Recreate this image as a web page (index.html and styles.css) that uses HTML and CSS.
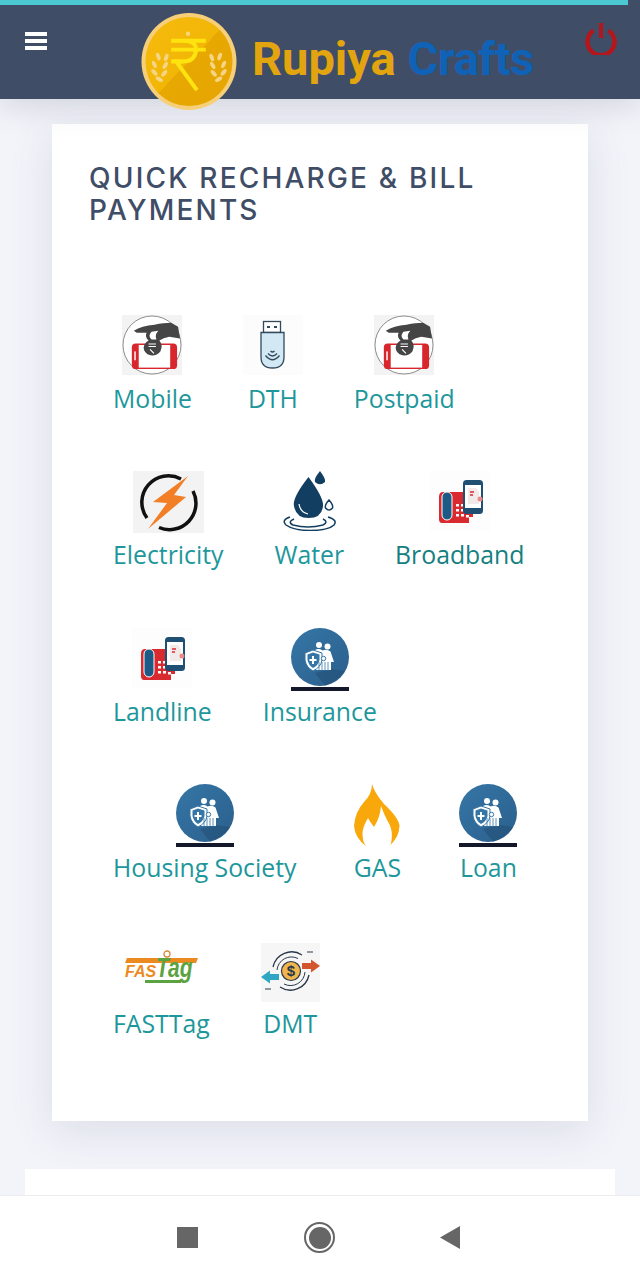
FILE: index.html
```html
<!DOCTYPE html>
<html lang="en">
<head>
<meta charset="utf-8">
<title>Rupiya Crafts</title>
<link rel="stylesheet" href="styles.css">
</head>
<body>
<svg class="defs" width="0" height="0" aria-hidden="true">
  <defs>
    <symbol id="i-mobile" viewBox="0 0 61 61">
      <rect width="61" height="61" fill="#f4f3f3"/>
      <circle cx="30.5" cy="30.5" r="29.5" fill="#fff" stroke="#8a8a8a" stroke-width="1"/>
      <rect x="10" y="29" width="46" height="26" rx="4" fill="#d8262c"/>
      <rect x="17" y="30.500" width="32" height="23" fill="#fff"/>
      <rect x="12.500" y="37" width="1.500" height="9" fill="#fff"/>
      <path d="M12 16 Q20 11 33 10 Q43 8 50 8 L57 12 L59 24 L48 22 Q42 23 38 26 Q42 31 39 37 Q35 42 29 41 Q22 39 22 33 Q23 28 27 26 Q23 22 25 18 L15 18 Z" fill="#454545"/>
      <path d="M30 17 Q26 21 30 25 L35 25 Q33 20 37 16 Z" fill="#fff"/>
      <path d="M27 29.500 H34.500 M27 32 H34.500 M28.500 35 L32.500 39" stroke="#fff" stroke-width="1.200" fill="none"/>
    </symbol>
    <symbol id="i-dth" viewBox="0 0 60 60">
      <rect width="60" height="60" fill="#fcfcfc"/>
      <rect x="20.500" y="6.500" width="17" height="11" fill="#fff" stroke="#33495c" stroke-width="1.300"/>
      <rect x="24" y="11" width="3" height="2" fill="#33495c"/>
      <rect x="31" y="11" width="3" height="2" fill="#33495c"/>
      <path d="M18 17.500 H41 V42 Q41 53 29.500 53 Q18 53 18 42 Z" fill="#d2e8f4" stroke="#33495c" stroke-width="1.300"/>
      <path d="M22.500 40.500 Q29.500 49 36.500 40.500 M25 38.500 Q29.500 43.500 34 38.500 M27.500 36 Q29.500 38 31.500 36" stroke="#33495c" stroke-width="1.300" fill="none"/>
    </symbol>
    <symbol id="i-elec" viewBox="0 0 71 62">
      <rect width="71" height="62" fill="#f3f3f3"/>
      <path d="M48 8 A26.500 26.500 0 0 0 14 47 M26 56.500 A26.500 26.500 0 0 0 60 20" fill="none" stroke="#111" stroke-width="3.500"/>
      <path d="M55 5 L20 31 L34 32 L15 58 L53 26 L41 24 Z" fill="#f27f26"/>
    </symbol>
    <symbol id="i-water" viewBox="0 0 60 60">
      <rect width="60" height="60" fill="#fff"/>
      <path d="M29.500 6 Q13 27 15 35 Q17 47 29.500 47 Q43 47 44 35 Q45 27 29.500 6 Z" fill="#123f61"/>
      <path d="M20 33 Q21 41 29 43" stroke="#fff" stroke-width="1.200" fill="none"/>
      <path d="M41 0 Q34.500 8 36 11 Q41 15.500 46 11 Q47 8 41 0 Z" fill="#123f61"/>
      <path d="M50 29 Q45.500 34 46.500 37 Q50 41 53.500 37 Q54.500 34 50 29 Z" fill="#fff" stroke="#123f61" stroke-width="1.500"/>
      <path d="M11 46 Q2 49 7 54 Q15 59.500 31 59.500 Q49 59.500 55 54 Q59 49 49 46" fill="none" stroke="#123f61" stroke-width="1.500"/>
      <path d="M15 48 Q8 51 14 54 Q29 58 44 54 Q50 51 44 48" fill="none" stroke="#123f61" stroke-width="1.500"/>
    </symbol>
    <symbol id="i-phone" viewBox="0 0 60 60">
      <rect width="60" height="60" fill="#fdfdfd"/>
      <path d="M9 26 Q9 21 13 21 H43 V46 H39 V52 H12 Q9 52 9 48 Z" fill="#d92a30"/>
      <rect x="12" y="21" width="10" height="28" rx="5" fill="#1e5a86" stroke="#fff" stroke-width="1"/>
      <g fill="#fff"><rect x="26" y="33" width="3" height="2.500"/><rect x="31" y="33" width="3" height="2.500"/><rect x="26" y="38" width="3" height="2.500"/><rect x="31" y="38" width="3" height="2.500"/><rect x="36" y="44" width="3" height="2.500"/><rect x="26" y="43" width="3" height="2.500"/><rect x="31" y="43" width="3" height="2.500"/></g>
      <rect x="34" y="10" width="18" height="32" rx="2.500" fill="#fff" stroke="#1f4f73" stroke-width="2"/>
      <rect x="34" y="10" width="18" height="4" fill="#1f4f73"/>
      <rect x="34" y="37" width="18" height="5" fill="#1f4f73"/>
      <path d="M38 17 H46 L49 21 V33 H38 Z" fill="#f2e9e9"/>
      <path d="M40 21 H44 M40 24 H43" stroke="#d92a30" stroke-width="1.300"/>
      <circle cx="50" cy="28" r="2.500" fill="#e78a8a"/>
    </symbol>
    <symbol id="i-family" viewBox="0 0 58 63">
      <defs>
        <linearGradient id="g-fam" x1="0" y1="0" x2="1" y2="1"><stop offset="0" stop-color="#3576a6"/><stop offset="1" stop-color="#2b5f8c"/></linearGradient>
      </defs>
      <circle cx="29" cy="29" r="29" fill="url(#g-fam)"/>
      <path d="M40 41 L54 43 Q46 54 34 57.500 L24 45 Z" fill="#234f74" opacity=".55"/>
      <rect y="59" width="58" height="4" fill="#14182b"/>
      <g fill="#fff">
        <circle cx="28" cy="17" r="3"/><circle cx="36.500" cy="18.500" r="3"/>
        <path d="M24 22 Q28 20 31.500 22.500 Q36 20.500 39.500 23.500 L43 34 H40 V42 H25 V30 Z"/>
      </g>
      <path d="M22 22 L31 25 V32 Q30 39 22 43 Q15 39 14 32 V25 Z" fill="#fff" stroke="#3576a6" stroke-width="1"/>
      <path d="M22 24.500 L28.500 26.500 V32 Q27.500 37 22 40 Q17.500 37 16.500 32 V26.500 Z" fill="#3576a6"/>
      <path d="M22 28 V36 M18.500 32 H25.500" stroke="#fff" stroke-width="2"/>
      <circle cx="32.500" cy="30.500" r="2.200" fill="#fff" stroke="#3576a6"/>
      <path d="M28 34 V43 M31 34 V43 M34 34 V43 M37 34 V43" stroke="#3576a6" stroke-width=".800"/>
    </symbol>
    <symbol id="i-gas" viewBox="0 0 46 62">
      <path d="M18 0 Q20 8 30 20 Q45 34 45.500 42 Q45 54 35 62 H12 Q1 54 0 42 Q1 28 10 18 Q18 10 18 0 Z" fill="#f9a80c"/>
      <path d="M36 62.500 Q41 48 33 36 Q30 30 27 22 Q26 34 20 43 Q16 38 14 34 Q4 50 12 62.500 Z" fill="#fff"/>
    </symbol>
    <symbol id="i-fastag" viewBox="0 0 76 36">
      <path d="M4 8 H75 L73 13 H2 Z" fill="#ec8a22"/>
      <circle cx="44" cy="4" r="3" fill="none" stroke="#d68a3a" stroke-width="1.300"/>
      <text class="ft-a" x="2" y="27">FAS</text>
      <text class="ft-b" transform="translate(33 27) scale(1 1.300)">Tag</text>
      <path d="M22 30 H58 V33 H22 Z" fill="#5aa340"/>
    </symbol>
    <symbol id="i-dmt" viewBox="0 0 59 59">
      <rect width="59" height="59" fill="#f6f6f6"/>
      <circle cx="30" cy="28" r="9.500" fill="#f0b64d" stroke="#28384a" stroke-width="1.200"/>
      <text class="dmt-s" x="30" y="33">$</text>
      <path d="M12 24 A19 19 0 0 1 41 12 M48 32 A19 19 0 0 1 19 44" fill="none" stroke="#28384a" stroke-width="1.300"/>
      <path d="M16 27 A14.500 14.500 0 0 1 37 15.500 M44 29 A14.500 14.500 0 0 1 23 41" fill="none" stroke="#28384a" stroke-width="1"/>
      <path d="M41 20 H50 V16.500 L59 23 L50 29.500 V26 H41 Z" fill="#d2552e"/>
      <path d="M18 31 H9 V27.500 L0 34 L9 40.500 V37 H18 Z" fill="#2ea6c4"/>
      <path d="M46 9 H52 M4 46 H10" stroke="#28384a" stroke-width="1"/>
    </symbol>
  </defs>
</svg>

<header class="topbar">
  <button class="burger" aria-label="Menu"><span></span><span></span><span></span></button>
  <div class="brand">
    <svg class="coin" viewBox="0 0 96 98" aria-hidden="true">
      <defs>
        <linearGradient id="g-coin" x1="0" y1="0" x2="1" y2="1"><stop offset="0" stop-color="#f5bb0c"/><stop offset=".5" stop-color="#f2b607"/><stop offset=".5" stop-color="#e8a802"/><stop offset="1" stop-color="#e6a503"/></linearGradient>
      </defs>
      <ellipse cx="48" cy="49" rx="48" ry="49" fill="#f6cf78"/>
      <ellipse cx="48" cy="49" rx="44" ry="45" fill="url(#g-coin)"/>
      <circle cx="47" cy="21" r="2.200" fill="#f8d778"/>
      <path d="M30 28 H65 M30 37 H65 M30 49 H42" stroke="#ffe30f" stroke-width="4" fill="none"/>
      <path d="M42 28 Q56 28 55 38 Q54 49 42 49 H35 L56 78" stroke="#ffe30f" stroke-width="4" fill="none"/>
      <g fill="#f5d584">
        <ellipse cx="17" cy="44" rx="2" ry="4" transform="rotate(-20 17 44)"/><ellipse cx="25" cy="45" rx="2" ry="4" transform="rotate(20 25 45)"/>
        <ellipse cx="13" cy="52" rx="2" ry="4" transform="rotate(-25 13 52)"/><ellipse cx="24" cy="53" rx="2" ry="4" transform="rotate(30 24 53)"/>
        <ellipse cx="13" cy="60" rx="2" ry="4" transform="rotate(-40 13 60)"/><ellipse cx="23" cy="61" rx="2" ry="4" transform="rotate(40 23 61)"/>
        <ellipse cx="18" cy="67" rx="2" ry="4" transform="rotate(-60 18 67)"/>
        <ellipse cx="79" cy="44" rx="2" ry="4" transform="rotate(20 79 44)"/><ellipse cx="71" cy="45" rx="2" ry="4" transform="rotate(-20 71 45)"/>
        <ellipse cx="83" cy="52" rx="2" ry="4" transform="rotate(25 83 52)"/><ellipse cx="72" cy="53" rx="2" ry="4" transform="rotate(-30 72 53)"/>
        <ellipse cx="83" cy="60" rx="2" ry="4" transform="rotate(40 83 60)"/><ellipse cx="73" cy="61" rx="2" ry="4" transform="rotate(-40 73 61)"/>
        <ellipse cx="78" cy="67" rx="2" ry="4" transform="rotate(60 78 67)"/>
      </g>
    </svg>
    <div class="wordmark"><span class="gold">Rupiya</span> <span class="blue">Crafts</span></div>
  </div>
  <svg class="power" viewBox="0 0 34 32" aria-hidden="true">
    <path d="M9.500 7.500 A13.500 13.500 0 1 0 24.500 7.500" fill="none" stroke="#b5161c" stroke-width="4.500"/>
    <path d="M17 0 V15" fill="none" stroke="#b5161c" stroke-width="4"/>
  </svg>
</header>

<main class="content">
  <section class="card">
    <h1 class="title">QUICK RECHARGE &amp; BILL PAYMENTS</h1>
    <div class="row">
      <a class="item"><svg class="ico ico-60"><use href="#i-mobile"/></svg><span class="label">Mobile</span></a>
      <a class="item"><svg class="ico ico-60"><use href="#i-dth"/></svg><span class="label">DTH</span></a>
      <a class="item"><svg class="ico ico-60"><use href="#i-mobile"/></svg><span class="label">Postpaid</span></a>
    </div>
    <div class="row">
      <a class="item"><svg class="ico ico-elec"><use href="#i-elec"/></svg><span class="label">Electricity</span></a>
      <a class="item"><svg class="ico ico-60"><use href="#i-water"/></svg><span class="label">Water</span></a>
      <a class="item"><svg class="ico ico-60"><use href="#i-phone"/></svg><span class="label label-dark">Broadband</span></a>
    </div>
    <div class="row">
      <a class="item"><svg class="ico ico-60"><use href="#i-phone"/></svg><span class="label">Landline</span></a>
      <a class="item"><svg class="ico ico-fam"><use href="#i-family"/></svg><span class="label">Insurance</span></a>
    </div>
    <div class="row">
      <a class="item"><svg class="ico ico-fam"><use href="#i-family"/></svg><span class="label">Housing Society</span></a>
      <a class="item"><svg class="ico ico-gas"><use href="#i-gas"/></svg><span class="label">GAS</span></a>
      <a class="item"><svg class="ico ico-fam"><use href="#i-family"/></svg><span class="label">Loan</span></a>
    </div>
    <div class="row">
      <a class="item"><svg class="ico ico-fast"><use href="#i-fastag"/></svg><span class="label">FASTTag</span></a>
      <a class="item"><svg class="ico ico-dmt"><use href="#i-dmt"/></svg><span class="label">DMT</span></a>
    </div>
  </section>
  <section class="card-next"></section>
</main>

<nav class="sysnav" aria-label="System navigation">
  <span class="nav-square"></span>
  <span class="nav-circle"></span>
  <svg class="nav-back" viewBox="0 0 20 23" aria-hidden="true"><path d="M20 0 V23 L0 11.500 Z" fill="#666"/></svg>
</nav>
</body>
</html>
```

FILE: styles.css
```css
* { box-sizing: border-box; }
html, body { margin: 0; height: 1280px; overflow: hidden; }
body { background: #f3f4fa; font-family: "Open Sans", "Liberation Sans", sans-serif; position: relative; }
.defs { position: absolute; }

.topbar {
  position: relative;
  height: 99px;
  background: #3f4d67;
  box-shadow: 0 6px 30px rgba(70, 80, 100, .2);
  display: flex;
  align-items: flex-start;
  z-index: 2;
}
.topbar::before {
  content: "";
  position: absolute;
  left: 0; top: 0;
  width: 628px; height: 5px;
  background: #4cc8d2;
}
.burger {
  margin: 32px 0 0 25px;
  padding: 0;
  border: 0;
  background: none;
  width: 22px; height: 18px;
  display: flex;
  flex-direction: column;
  justify-content: space-between;
}
.burger span { display: block; height: 4px; background: #fff; }
.brand { display: flex; align-items: flex-start; margin: 13px 0 0 94px; }
.coin { width: 96px; height: 97px; flex: none; }
.wordmark {
  margin: 21px 0 0 15px;
  font-family: Roboto, "Liberation Sans", sans-serif;
  font-weight: 700;
  font-size: 47px;
  line-height: 49px;
  white-space: nowrap;
}
.gold { color: #e2a50f; }
.blue { color: #0f62b5; letter-spacing: -.5px; }
.power { position: absolute; left: 584px; top: 23px; width: 34px; height: 32px; }

.content { padding: 25px 25px 0; }
.card {
  margin: 0 27px;
  height: 997px;
  padding: 38px 37px 0;
  background: #fff;
  box-shadow: 0 10px 40px rgba(80, 90, 120, .14);
}
.title {
  margin: 0 0 89px;
  font-family: Inter, "Liberation Sans", sans-serif;
  font-weight: 500;
  font-size: 28px;
  line-height: 32px;
  letter-spacing: 2.200px;
  color: #3f4d67;
}
.row { display: flex; align-items: flex-start; gap: 51px; height: 156.400px; padding-left: 24px; }
.item { display: flex; flex-direction: column; align-items: center; text-decoration: none; }
.ico { display: block; flex: none; height: 60px; }
.ico-60 { width: 60px; }
.ico-elec { width: 71px; height: 62px; }
.ico-fam { width: 58px; height: 63px; margin: 0 1px; }
.ico-gas { width: 46px; height: 62px; margin: 0 7px; }
.ico-fast { width: 76px; height: 36px; margin: 9px 0 14px; }
.ico-dmt { width: 59px; height: 59px; margin: 2px 0 -2px; }
.label {
  margin-top: 5px;
  font-size: 24.800px;
  line-height: 36px;
  color: #1d979b;
  white-space: nowrap;
}
.label-dark { color: #14807f; }
.ico-elec + .label, .ico-gas + .label { margin-top: 3px; }
.ico-fam + .label { margin-top: 2px; }
.ft-a { font: italic 800 16px "Liberation Sans", sans-serif; fill: #ec8a22; }
.ft-b { font: italic 800 21px "Liberation Sans", sans-serif; fill: #5aa340; }
.dmt-s { font: 700 15px "Liberation Sans", sans-serif; fill: #28384a; text-anchor: middle; }

.card-next { height: 60px; margin-top: 48px; background: #fff; }

.sysnav {
  position: absolute;
  left: 0; right: 0; bottom: 0;
  height: 85px;
  background: #fff;
  border-top: 1px solid #ededf0;
  z-index: 3;
  display: flex;
  align-items: center;
  padding: 0 0 1px 177px;
}
.nav-square { width: 21px; height: 21px; background: #666; }
.nav-circle {
  width: 31px; height: 31px;
  margin-left: 106px;
  border-radius: 50%;
  border: 2.500px solid #666;
  padding: 2.500px;
  background: #666;
  background-clip: content-box;
}
.nav-back { width: 20px; height: 23px; margin-left: 105px; }
```
